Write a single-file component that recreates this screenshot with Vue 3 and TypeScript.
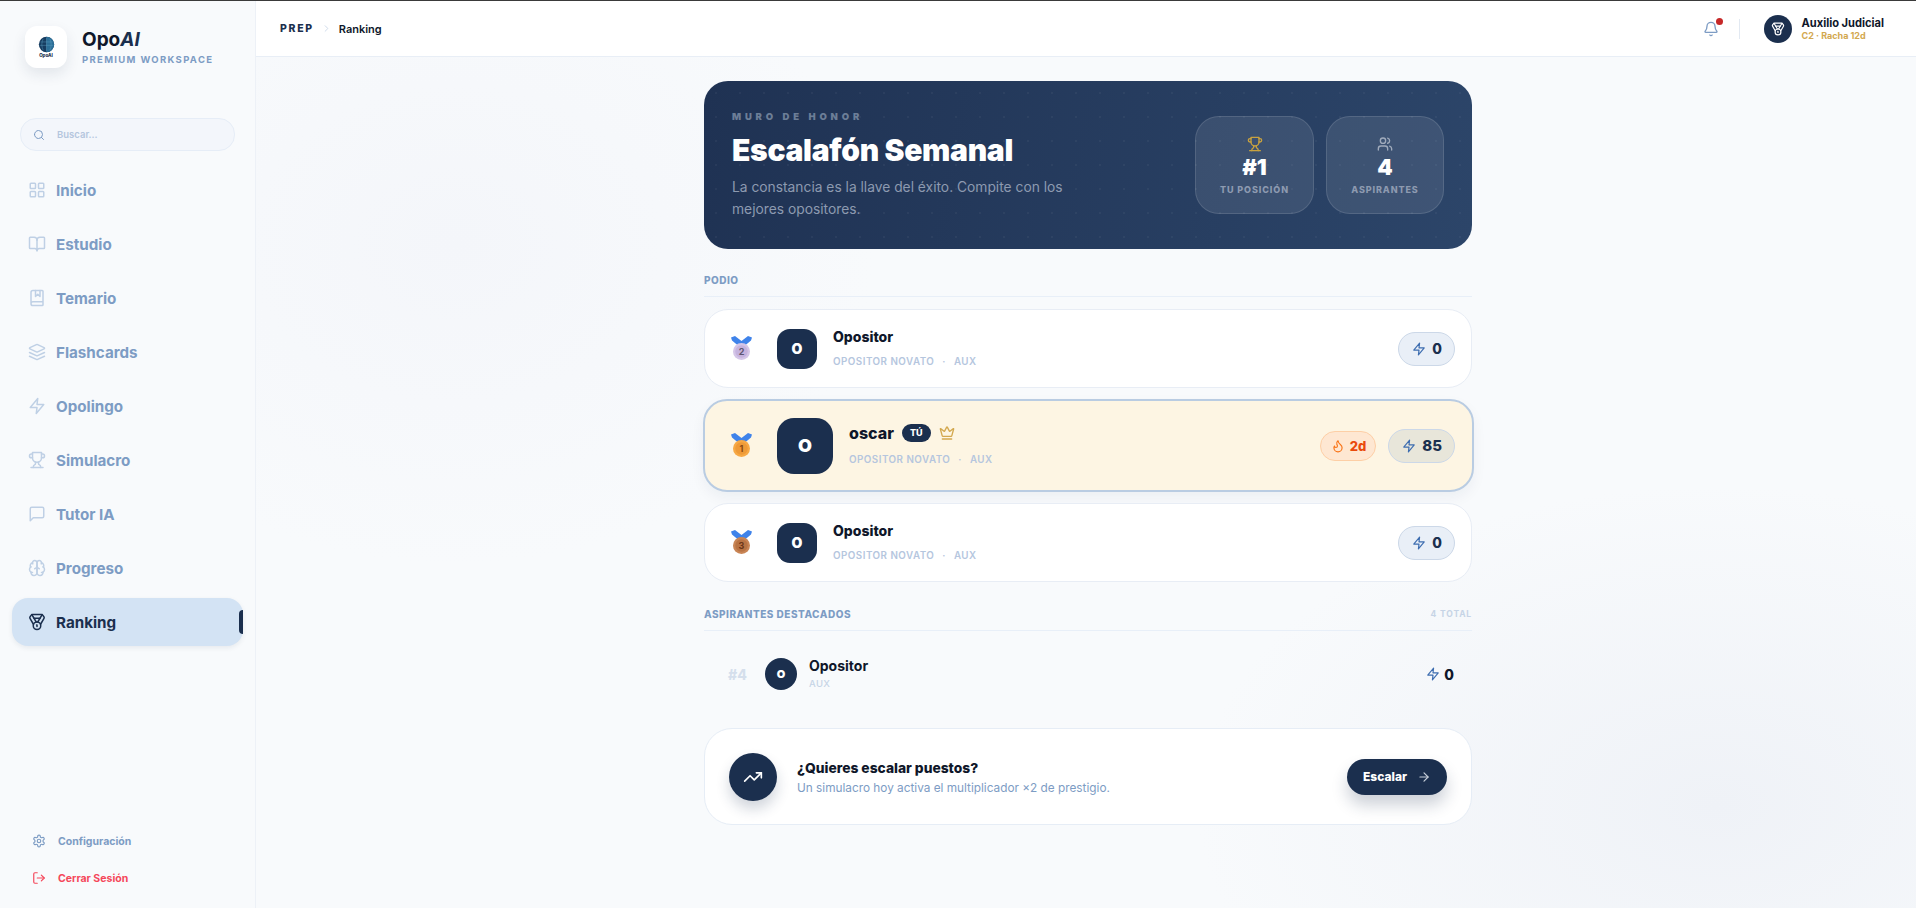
<template>
  <div class="app">
    <div class="top-line"></div>
    <div class="shell">
      <aside class="sidebar">
        <div class="brand">
          <div class="brand-logo">
            <svg width="17" height="17" viewBox="0 0 20 20">
              <circle cx="10" cy="10" r="9" fill="#163c60" />
              <path d="M10 1a9 9 0 0 1 0 18z" fill="#2c6f98" />
              <path d="M3 7h14M2 11h16M10 2v16M6 3.5c-2 4-2 9 0 13M14 3.5c2 4 2 9 0 13" stroke="#5fa3c4" stroke-width=".5" fill="none" />
            </svg>
            <span class="brand-mini">OpoAI</span>
          </div>
          <div class="brand-text">
            <div class="brand-name">Opo<em>AI</em></div>
            <div class="brand-sub">PREMIUM WORKSPACE</div>
          </div>
        </div>

        <div class="search">
          <Icon name="search" :size="12" class="search-icon" />
          <span>Buscar...</span>
        </div>

        <nav class="nav">
          <div v-for="item in navItems" :key="item.label" class="nav-item" :class="{ active: item.active }">
            <Icon :name="item.icon" :size="18" class="nav-icon" />
            <span>{{ item.label }}</span>
            <i v-if="item.active" class="nav-bar"></i>
          </div>
        </nav>

        <div class="side-bottom">
          <div class="side-link">
            <Icon name="settings" :size="14" />
            <span>Configuración</span>
          </div>
          <div class="side-link danger">
            <Icon name="logout" :size="14" />
            <span>Cerrar Sesión</span>
          </div>
        </div>
      </aside>

      <div class="content">
        <header class="topbar">
          <div class="crumbs">
            <span class="crumb-root">PREP</span>
            <Icon name="chevron" :size="11" class="crumb-sep" />
            <span class="crumb-page">Ranking</span>
          </div>
          <div class="top-right">
            <div class="bell">
              <Icon name="bell" :size="16" />
              <i class="bell-dot"></i>
            </div>
            <div class="top-divider"></div>
            <div class="user-avatar"><Icon name="medal" :size="14" /></div>
            <div>
              <div class="user-name">Auxilio Judicial</div>
              <div class="user-sub">C2 · Racha 12d</div>
            </div>
          </div>
        </header>

        <main class="main">
          <div class="column">
            <section class="hero">
              <div class="hero-text">
                <div class="hero-eyebrow">MURO DE HONOR</div>
                <h1>Escalafón Semanal</h1>
                <p>La constancia es la llave del éxito. Compite con los mejores opositores.</p>
              </div>
              <div class="hero-stats">
                <div class="stat">
                  <Icon name="trophy" :size="16" class="stat-gold" />
                  <strong>#1</strong>
                  <span>TU POSICIÓN</span>
                </div>
                <div class="stat">
                  <Icon name="users" :size="16" class="stat-grey" />
                  <strong>4</strong>
                  <span>ASPIRANTES</span>
                </div>
              </div>
            </section>

            <div class="section-head first">
              <span>PODIO</span>
            </div>

            <div class="podium">
              <div v-for="row in podium" :key="row.rank" class="card" :class="{ me: row.me }">
                <div class="medal">
                  <svg width="23" height="26" viewBox="0 0 23 26">
                    <path d="M1 1.5 5 0l6.5 5L18 0l4 1.5-1 3-6 5h-7l-6-5z" fill="#3f83ea" />
                    <circle cx="11.5" cy="15.5" r="8.5" :fill="row.medal" />
                    <circle cx="11.5" cy="15.5" r="6.2" :fill="row.medalInner" />
                    <text x="11.5" y="19" text-anchor="middle" class="medal-num" :fill="row.medalText">{{ row.rank }}</text>
                  </svg>
                </div>
                <div class="avatar">{{ row.initial }}</div>
                <div class="who">
                  <div class="who-name">
                    <span>{{ row.name }}</span>
                    <template v-if="row.me">
                      <b class="you">TÚ</b>
                      <Icon name="crown" :size="16" class="crown" />
                    </template>
                  </div>
                  <div class="who-meta">
                    <span>OPOSITOR NOVATO</span><i>·</i><span>AUX</span>
                  </div>
                </div>
                <div v-if="row.me" class="streak">
                  <Icon name="flame" :size="14" />
                  <span>2d</span>
                </div>
                <div class="points">
                  <Icon name="zap" :size="14" class="zap" />
                  <span>{{ row.points }}</span>
                </div>
              </div>
            </div>

            <div class="section-head second">
              <span>ASPIRANTES DESTACADOS</span>
              <small>4 TOTAL</small>
            </div>

            <div class="rest-row">
              <span class="rest-rank">#4</span>
              <div class="rest-avatar">O</div>
              <div class="rest-who">
                <div class="rest-name">Opositor</div>
                <div class="rest-meta">AUX</div>
              </div>
              <div class="rest-points">
                <Icon name="zap" :size="14" class="zap" />
                <span>0</span>
              </div>
            </div>

            <section class="cta">
              <div class="cta-icon"><Icon name="trending" :size="20" /></div>
              <div class="cta-text">
                <h3>¿Quieres escalar puestos?</h3>
                <p>Un simulacro hoy activa el multiplicador ×2 de prestigio.</p>
              </div>
              <button class="cta-btn">
                <span>Escalar</span>
                <Icon name="arrow" :size="14" class="cta-arrow" />
              </button>
            </section>
          </div>
        </main>
      </div>
    </div>
  </div>
</template>

<script setup lang="ts">
import { h } from 'vue'

const circle = (x: number, y: number, r: number) =>
  `M${x - r} ${y}a${r} ${r} 0 1 0 ${r * 2} 0a${r} ${r} 0 1 0 ${-r * 2} 0`
const box = (x: number, y: number, w: number, hh: number) =>
  `M${x + 1} ${y}h${w - 2}a1 1 0 0 1 1 1v${hh - 2}a1 1 0 0 1-1 1h${-(w - 2)}a1 1 0 0 1-1-1v${-(hh - 2)}a1 1 0 0 1 1-1z`

const icons: Record<string, string[]> = {
  search: [circle(11, 11, 8), 'm21 21-4.3-4.3'],
  grid: [box(3, 3, 7, 7), box(14, 3, 7, 7), box(14, 14, 7, 7), box(3, 14, 7, 7)],
  book: ['M12 7v14', 'M3 18a1 1 0 0 1-1-1V4a1 1 0 0 1 1-1h5a4 4 0 0 1 4 4 4 4 0 0 1 4-4h5a1 1 0 0 1 1 1v13a1 1 0 0 1-1 1h-6a3 3 0 0 0-3 3 3 3 0 0 0-3-3z'],
  bookMarked: ['M10 2v8l3-3 3 3V2', 'M4 19.5v-15A2.5 2.5 0 0 1 6.5 2H19a1 1 0 0 1 1 1v18a1 1 0 0 1-1 1H6.5a1 1 0 0 1 0-5H20'],
  layers: ['m12.83 2.18a2 2 0 0 0-1.66 0L2.6 6.08a1 1 0 0 0 0 1.83l8.58 3.91a2 2 0 0 0 1.66 0l8.58-3.9a1 1 0 0 0 0-1.83Z', 'm22 17.65-9.17 4.16a2 2 0 0 1-1.66 0L2 17.65', 'm22 12.65-9.17 4.16a2 2 0 0 1-1.66 0L2 12.65'],
  zap: ['M13 2 3 14h9l-1 8 10-12h-9l1-8z'],
  trophy: ['M6 9H4.5a2.5 2.5 0 0 1 0-5H6', 'M18 9h1.5a2.5 2.5 0 0 0 0-5H18', 'M4 22h16', 'M10 14.66V17c0 .55-.47.98-.97 1.21C7.85 18.75 7 20.24 7 22', 'M14 14.66V17c0 .55.47.98.97 1.21C16.15 18.75 17 20.24 17 22', 'M18 2H6v7a6 6 0 0 0 12 0V2Z'],
  message: ['M21 15a2 2 0 0 1-2 2H7l-4 4V5a2 2 0 0 1 2-2h14a2 2 0 0 1 2 2z'],
  brain: ['M12 5a3 3 0 1 0-5.997.125 4 4 0 0 0-2.526 5.77 4 4 0 0 0 .556 6.588A4 4 0 1 0 12 18Z', 'M12 5a3 3 0 1 1 5.997.125 4 4 0 0 1 2.526 5.77 4 4 0 0 1-.556 6.588A4 4 0 1 1 12 18Z', 'M15 13a4.5 4.5 0 0 1-3-4 4.5 4.5 0 0 1-3 4', 'M17.599 6.5a3 3 0 0 0 .399-1.375', 'M6.003 5.125A3 3 0 0 0 6.401 6.5', 'M3.477 10.896a4 4 0 0 1 .585-.396', 'M19.938 10.5a4 4 0 0 1 .585.396', 'M6 18a4 4 0 0 1-1.967-.516', 'M19.967 17.484A4 4 0 0 1 18 18'],
  medal: ['M7.21 15 2.66 7.14a2 2 0 0 1 .13-2.2L4.4 2.8A2 2 0 0 1 6 2h12a2 2 0 0 1 1.6.8l1.6 2.14a2 2 0 0 1 .14 2.2L16.79 15', 'M11 12 5.12 2.2', 'm13 12 5.88-9.8', 'M8 7h8', circle(12, 17, 5), 'M12 18v-2h-.5'],
  settings: ['M12.22 2h-.44a2 2 0 0 0-2 2v.18a2 2 0 0 1-1 1.73l-.43.25a2 2 0 0 1-2 0l-.15-.08a2 2 0 0 0-2.73.73l-.22.38a2 2 0 0 0 .73 2.73l.15.1a2 2 0 0 1 1 1.72v.51a2 2 0 0 1-1 1.74l-.15.09a2 2 0 0 0-.73 2.73l.22.38a2 2 0 0 0 2.73.73l.15-.08a2 2 0 0 1 2 0l.43.25a2 2 0 0 1 1 1.73V20a2 2 0 0 0 2 2h.44a2 2 0 0 0 2-2v-.18a2 2 0 0 1 1-1.73l.43-.25a2 2 0 0 1 2 0l.15.08a2 2 0 0 0 2.73-.73l.22-.39a2 2 0 0 0-.73-2.73l-.15-.08a2 2 0 0 1-1-1.74v-.5a2 2 0 0 1 1-1.74l.15-.09a2 2 0 0 0 .73-2.73l-.22-.38a2 2 0 0 0-2.73-.73l-.15.08a2 2 0 0 1-2 0l-.43-.25a2 2 0 0 1-1-1.73V4a2 2 0 0 0-2-2z', circle(12, 12, 3)],
  logout: ['M9 21H5a2 2 0 0 1-2-2V5a2 2 0 0 1 2-2h4', 'm16 17 5-5-5-5', 'M21 12H9'],
  chevron: ['m9 18 6-6-6-6'],
  bell: ['M10.268 21a2 2 0 0 0 3.464 0', 'M3.262 15.326A1 1 0 0 0 4 17h16a1 1 0 0 0 .74-1.673C19.41 13.956 18 12.499 18 8A6 6 0 0 0 6 8c0 4.499-1.411 5.956-2.738 7.326'],
  users: ['M16 21v-2a4 4 0 0 0-4-4H6a4 4 0 0 0-4 4v2', circle(9, 7, 4), 'M22 21v-2a4 4 0 0 0-3-3.87', 'M16 3.13a4 4 0 0 1 0 7.75'],
  crown: ['M11.562 3.266a.5.5 0 0 1 .876 0L15.39 8.87a1 1 0 0 0 1.516.294L21.183 5.5a.5.5 0 0 1 .798.519l-2.834 10.246a1 1 0 0 1-.956.734H5.81a1 1 0 0 1-.957-.734L2.02 6.02a.5.5 0 0 1 .798-.519l4.276 3.664a1 1 0 0 0 1.516-.294z', 'M5 21h14'],
  flame: ['M8.5 14.5A2.5 2.5 0 0 0 11 12c0-1.38-.5-2-1-3-1.072-2.143-.224-4.054 2-6 .5 2.5 2 4.9 4 6.5 2 1.6 3 3.5 3 5.5a7 7 0 1 1-14 0c0-1.153.433-2.294 1-3a2.5 2.5 0 0 0 2.5 2.5z'],
  trending: ['M16 7h6v6', 'm22 7-8.5 8.5-5-5L2 17'],
  arrow: ['M5 12h14', 'm12 5 7 7-7 7']
}

const Icon = (props: { name: string; size: number }) =>
  h(
    'svg',
    {
      width: props.size,
      height: props.size,
      viewBox: '0 0 24 24',
      fill: 'none',
      stroke: 'currentColor',
      'stroke-width': 2,
      'stroke-linecap': 'round',
      'stroke-linejoin': 'round'
    },
    icons[props.name].map((d) => h('path', { d }))
  )
Icon.props = ['name', 'size']

const navItems = [
  { label: 'Inicio', icon: 'grid' },
  { label: 'Estudio', icon: 'book' },
  { label: 'Temario', icon: 'bookMarked' },
  { label: 'Flashcards', icon: 'layers' },
  { label: 'Opolingo', icon: 'zap' },
  { label: 'Simulacro', icon: 'trophy' },
  { label: 'Tutor IA', icon: 'message' },
  { label: 'Progreso', icon: 'brain' },
  { label: 'Ranking', icon: 'medal', active: true }
]

const podium = [
  { rank: 2, name: 'Opositor', initial: 'O', points: 0, medal: '#d5c6e8', medalInner: '#c6b3de', medalText: '#5d5470' },
  { rank: 1, name: 'oscar', initial: 'O', points: 85, me: true, medal: '#f7a945', medalInner: '#ee9a38', medalText: '#8a4a12' },
  { rank: 3, name: 'Opositor', initial: 'O', points: 0, medal: '#c98555', medalInner: '#b87344', medalText: '#6a3518' }
]
</script>

<style>
html,
body {
  margin: 0;
  background: #f8fafc;
}
</style>

<style scoped>
.app {
  height: 908px;
  overflow: hidden;
  display: flex;
  flex-direction: column;
  font-family: Inter, "Liberation Sans", sans-serif;
  color: #0f172a;
}

.top-line {
  height: 1px;
  background: #3a3a3a;
  flex: none;
}

.shell {
  flex: 1;
  display: flex;
  min-height: 0;
}

.sidebar {
  flex: none;
  display: flex;
  flex-direction: column;
  background: #f8fafc;
  border-right: 1px solid #edf1f7;
  padding: 25px 12px 0;
  box-sizing: content-box;
  width: 231px;
}

.brand {
  display: flex;
  align-items: center;
  gap: 15px;
  padding-left: 13px;
}

.brand-logo {
  width: 42px;
  height: 42px;
  border-radius: 12px;
  background: #fff;
  box-shadow: 0 6px 14px rgba(27, 47, 78, 0.1);
  display: flex;
  flex-direction: column;
  align-items: center;
  justify-content: center;
}

.brand-mini {
  font-size: 4.5px;
  font-weight: 800;
  line-height: 5px;
  color: #1b2f4e;
}

.brand-text {
  padding-bottom: 2px;
}

.brand-name {
  font-size: 19px;
  font-weight: 700;
  line-height: 24px;
  color: #0f172a;
}

.brand-name em {
  font-style: italic;
  color: #1b2f4e;
}

.brand-sub {
  margin-top: 2px;
  font-size: 9.5px;
  font-weight: 700;
  letter-spacing: 0.14em;
  color: #7d9cc4;
}

.search {
  margin: 50px 8px 0;
  height: 31px;
  border: 1px solid #e6edf7;
  border-radius: 16px;
  background: #f3f6fb;
  display: flex;
  align-items: center;
  padding-left: 12px;
  gap: 12px;
  font-size: 9.5px;
  font-weight: 600;
  color: #b5c6de;
}

.search-icon {
  color: #7d9cc4;
}

.nav {
  margin-top: 15px;
  display: flex;
  flex-direction: column;
  gap: 6px;
}

.nav-item {
  position: relative;
  height: 48px;
  display: flex;
  align-items: center;
  gap: 10px;
  padding-left: 16px;
  border-radius: 16px;
  font-size: 15.2px;
  font-weight: 700;
  color: #7d9cc4;
}

.nav-icon {
  color: #bfd0e5;
}

.nav-item.active {
  background: #d3e3f4;
  color: #1b2f4e;
  box-shadow: 0 2px 5px rgba(27, 47, 78, 0.08);
}

.nav-item.active .nav-icon {
  color: #1b2f4e;
}

.nav-bar {
  position: absolute;
  right: 0;
  top: 12px;
  width: 4px;
  height: 24px;
  background: #1b2f4e;
  border-radius: 4px 0 0 4px;
}

.side-bottom {
  margin-top: auto;
  padding: 0 0 18px 20px;
  display: flex;
  flex-direction: column;
  gap: 13px;
}

.side-link {
  height: 24px;
  display: flex;
  align-items: center;
  gap: 12px;
  font-size: 10.5px;
  font-weight: 700;
  color: #7d9cc4;
}

.side-link.danger {
  color: #f5475a;
}

.content {
  flex: 1;
  min-width: 0;
  display: flex;
  flex-direction: column;
}

.topbar {
  height: 55px;
  flex: none;
  background: #fff;
  border-bottom: 1px solid #e8eef6;
  display: flex;
  align-items: center;
  justify-content: space-between;
  padding: 0 32px 0 24px;
}

.crumbs {
  display: flex;
  align-items: center;
  gap: 7px;
}

.crumb-root {
  font-size: 10.5px;
  font-weight: 800;
  letter-spacing: 0.16em;
  color: #1b2f4e;
}

.crumb-sep {
  color: #cbd8e8;
}

.crumb-page {
  font-size: 11px;
  font-weight: 600;
  color: #0f172a;
}

.top-right {
  display: flex;
  align-items: center;
}

.bell {
  position: relative;
  display: flex;
  color: #7d9cc4;
}

.bell-dot {
  position: absolute;
  top: -3px;
  right: -4px;
  width: 7px;
  height: 7px;
  border-radius: 50%;
  background: #c62828;
}

.top-divider {
  width: 1px;
  height: 20px;
  margin: 0 24px 0 20px;
  background: #e2e9f2;
}

.user-avatar {
  width: 28px;
  height: 28px;
  border-radius: 50%;
  background: #1b2f4e;
  color: #fff;
  display: flex;
  align-items: center;
  justify-content: center;
  margin-right: 10px;
}

.user-name {
  font-size: 11.1px;
  font-weight: 700;
  line-height: 13px;
  color: #0f172a;
}

.user-sub {
  font-size: 9px;
  font-weight: 700;
  line-height: 11px;
  color: #d3a84f;
}

.main {
  flex: 1;
  min-height: 0;
  background:
    radial-gradient(420px 320px at 12% 22%, #f4f6fa 0%, rgba(244, 246, 250, 0) 100%),
    radial-gradient(520px 320px at 88% 88%, #eff2f7 0%, rgba(239, 242, 247, 0) 100%),
    #f8fafc;
  display: flex;
  justify-content: center;
  padding: 24px 0 0 4px;
}

.column {
  width: 768px;
}

.hero {
  height: 168px;
  box-sizing: border-box;
  border-radius: 24px;
  padding: 0 28px;
  display: flex;
  align-items: center;
  justify-content: space-between;
  background:
    radial-gradient(circle, rgba(255, 255, 255, 0.04) 1px, transparent 1.5px) 0 0 / 24px 24px,
    linear-gradient(100deg, #1f3253 0%, #2c4569 100%);
}

.hero-eyebrow {
  font-size: 9.5px;
  font-weight: 900;
  letter-spacing: 0.4em;
  color: #6c7e97;
}

.hero h1 {
  margin: 10px 0 8px;
  font-size: 30px;
  line-height: 36px;
  font-weight: 900;
  letter-spacing: -0.01em;
  color: #fff;
}

.hero p {
  margin: 0;
  width: 345px;
  font-size: 13.8px;
  line-height: 22px;
  color: #8d9ab0;
}

.hero-stats {
  display: flex;
  gap: 12px;
}

.stat {
  width: 119px;
  height: 98px;
  box-sizing: border-box;
  border-radius: 24px;
  border: 1px solid rgba(255, 255, 255, 0.12);
  background: rgba(255, 255, 255, 0.09);
  display: flex;
  flex-direction: column;
  align-items: center;
  justify-content: center;
}

.stat + .stat {
  width: 118px;
}

.stat-gold {
  color: #c9a23f;
}

.stat-grey {
  color: #a0abbc;
}

.stat strong {
  margin-top: 3px;
  font-size: 22px;
  line-height: 24px;
  font-weight: 900;
  color: #fff;
}

.stat span {
  margin-top: 5px;
  font-size: 9px;
  font-weight: 800;
  letter-spacing: 0.1em;
  color: #8d9ab0;
}

.section-head {
  display: flex;
  justify-content: space-between;
  align-items: flex-start;
  height: 23px;
  line-height: 12px;
  box-sizing: border-box;
  border-bottom: 1px solid #e8eff8;
  font-size: 10px;
  font-weight: 800;
  letter-spacing: 0.05em;
  color: #7d9cc4;
}

.section-head.first {
  margin-top: 25px;
  margin-bottom: 12px;
}

.section-head.second {
  margin-top: 26px;
}

.section-head small {
  font-size: 8.5px;
  font-weight: 700;
  letter-spacing: 0.1em;
  color: #c6d4e6;
}

.podium {
  display: flex;
  flex-direction: column;
  gap: 11px;
}

.card {
  height: 79px;
  box-sizing: border-box;
  display: flex;
  align-items: center;
  padding: 0 16px;
  background: #fff;
  border: 1px solid #e8edf5;
  border-radius: 24px;
}

.card.me {
  height: 93px;
  margin: 0 -1.5px;
  padding: 0 16.5px;
  background: #fdf5e3;
  border: 2px solid #b9cce2;
  box-shadow: 0 6px 14px rgba(27, 47, 78, 0.05);
}

.medal {
  width: 40px;
  margin-right: 16px;
  display: flex;
  justify-content: center;
}

.medal-num {
  font-family: Inter, sans-serif;
  font-size: 9px;
  font-weight: 700;
}

.avatar {
  width: 40px;
  height: 40px;
  border-radius: 13px;
  background: #1b2f4e;
  color: #fff;
  display: flex;
  align-items: center;
  justify-content: center;
  font-size: 14px;
  font-weight: 900;
}

.me .avatar {
  width: 56px;
  height: 56px;
  border-radius: 17px;
  font-size: 18px;
}

.who {
  flex: 1;
  margin-left: 16px;
  padding-bottom: 2px;
}

.who-name {
  display: flex;
  align-items: center;
  font-size: 14px;
  font-weight: 800;
  line-height: 18px;
  color: #0f172a;
}

.me .who-name {
  font-size: 16px;
}

.you {
  margin-left: 8px;
  padding: 0 8px;
  height: 18px;
  line-height: 17px;
  border-radius: 9px;
  background: #1b2f4e;
  color: #fff;
  font-size: 9px;
  font-weight: 800;
}

.crown {
  margin-left: 8px;
  color: #d3a84f;
}

.who-meta {
  margin-top: 10px;
  display: flex;
  gap: 8px;
  font-size: 9.8px;
  line-height: 12px;
  font-weight: 600;
  letter-spacing: 0.05em;
  color: #b5c6de;
}

.me .who-meta {
  margin-top: 12px;
}

.who-meta i {
  font-style: normal;
}

.points {
  height: 34px;
  box-sizing: border-box;
  padding: 0 12px 0 13px;
  border-radius: 17px;
  border: 1px solid #ccd8e8;
  background: #e9eff7;
  display: flex;
  align-items: center;
  gap: 6px;
  font-size: 14px;
  font-weight: 800;
  color: #1b2f4e;
}

.me .points {
  background: #e8e6da;
  font-size: 15px;
}

.zap {
  color: #3d6db0;
}

.streak {
  height: 30px;
  box-sizing: border-box;
  margin-right: 12px;
  padding: 0 9px 0 10px;
  border-radius: 15px;
  border: 1px solid #fdcfa6;
  background: #fee7d2;
  display: flex;
  align-items: center;
  gap: 5px;
  font-size: 13px;
  font-weight: 800;
  color: #ea4a0c;
}

.streak svg {
  color: #f97316;
}

.rest-row {
  height: 86px;
  display: flex;
  align-items: center;
  padding: 0 18px 0 24px;
}

.rest-rank {
  width: 37px;
  font-size: 14px;
  font-weight: 800;
  color: #d5dfec;
}

.rest-avatar {
  width: 32px;
  height: 32px;
  border-radius: 50%;
  background: #1b2f4e;
  color: #fff;
  display: flex;
  align-items: center;
  justify-content: center;
  font-size: 11px;
  font-weight: 900;
}

.rest-who {
  flex: 1;
  margin-left: 12px;
  padding-bottom: 2px;
}

.rest-name {
  font-size: 14px;
  font-weight: 700;
  line-height: 17px;
  color: #0f172a;
}

.rest-meta {
  margin-top: 4px;
  font-size: 9.5px;
  line-height: 12px;
  font-weight: 500;
  letter-spacing: 0.04em;
  color: #c6d4e6;
}

.rest-points {
  display: flex;
  align-items: center;
  gap: 4px;
  font-size: 14px;
  font-weight: 800;
  color: #0f172a;
}

.cta {
  margin-top: 11px;
  height: 97px;
  box-sizing: border-box;
  display: flex;
  align-items: center;
  padding: 0 24px;
  background: #fff;
  border: 1px solid #e6edf6;
  border-radius: 28px;
}

.cta-icon {
  width: 48px;
  height: 48px;
  border-radius: 50%;
  background: #1b2f4e;
  color: #fff;
  display: flex;
  align-items: center;
  justify-content: center;
  box-shadow: 0 8px 14px rgba(27, 47, 78, 0.2);
}

.cta-text {
  flex: 1;
  margin-left: 20px;
  padding-top: 2px;
}

.cta-text h3 {
  margin: 0;
  font-size: 13.8px;
  line-height: 18px;
  font-weight: 800;
  color: #0f172a;
}

.cta-text p {
  margin: 4px 0 0;
  font-size: 11.8px;
  line-height: 15px;
  color: #7d9cc4;
}

.cta-btn {
  width: 100px;
  height: 36px;
  border: 0;
  border-radius: 18px;
  background: #1b2f4e;
  color: #fff;
  display: flex;
  align-items: center;
  justify-content: center;
  gap: 10px;
  font-family: inherit;
  font-size: 12px;
  font-weight: 800;
  box-shadow: 0 10px 16px rgba(27, 47, 78, 0.22);
}

.cta-arrow {
  color: #c7cfda;
}
</style>
